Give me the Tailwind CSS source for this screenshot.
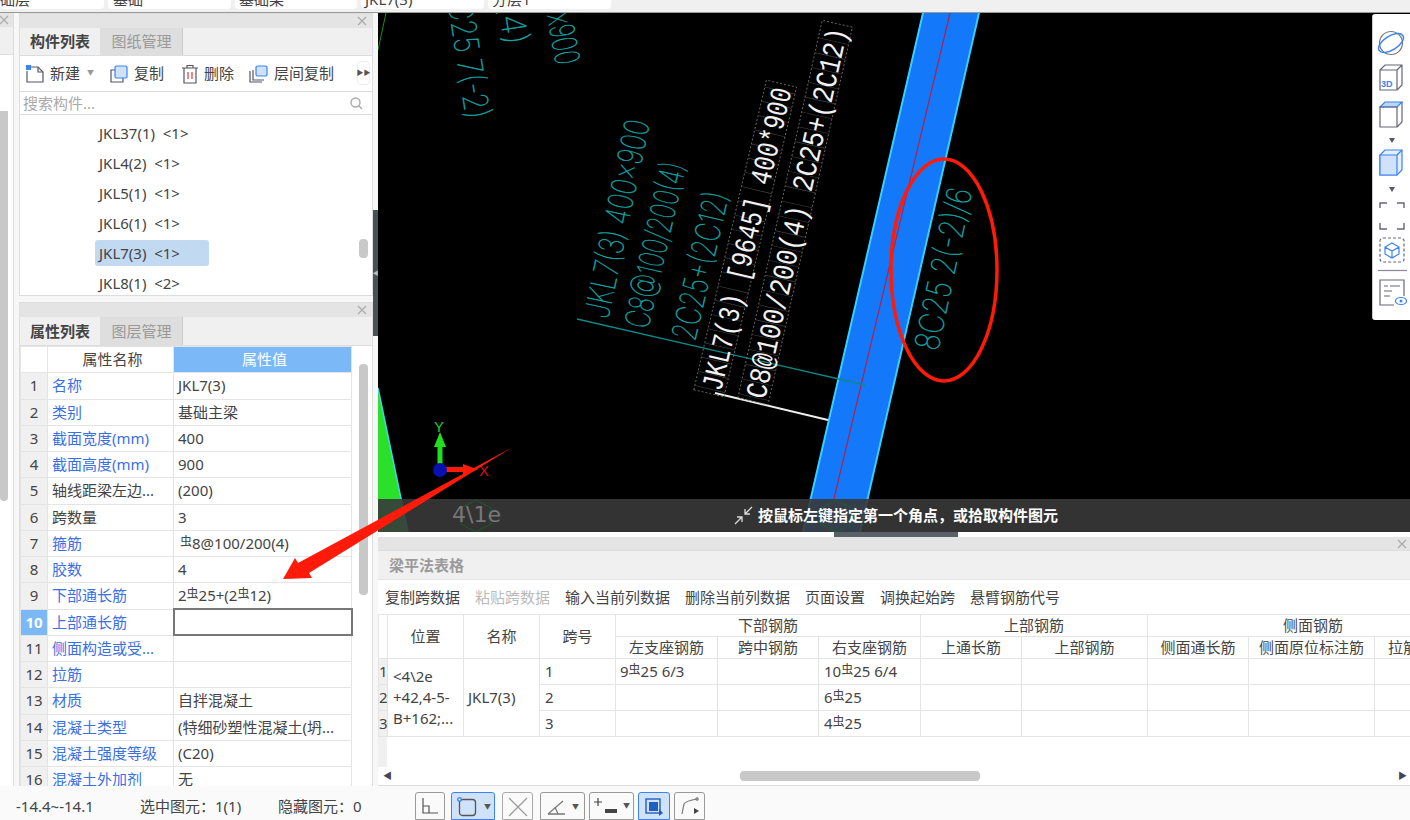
<!DOCTYPE html>
<html lang="zh-CN">
<head>
  <meta charset="UTF-8">
  <title>梁平法表格</title>
  <script src="https://cdn.jsdelivr.net/npm/@tailwindcss/browser@4"></script>
</head>
<body class="font-['Noto_Sans','Noto_Sans_CJK_SC',sans-serif] text-[15px] text-[#444]">
<div class="relative w-[1410px] h-[820px] overflow-hidden flex flex-col bg-white">

  <!-- top selector strip, only the bottom of it is visible -->
  <div class="h-[13px] shrink-0 bg-[#f0f0f0] flex gap-[4px] overflow-hidden border-b border-[#999]">
    <div class="w-[104px] h-[9px] bg-white rounded-b overflow-hidden"><div class="-mt-[11px] ml-[-15px] leading-[20px]">基础层</div></div>
    <div class="w-[123px] h-[9px] bg-white rounded-b overflow-hidden"><div class="-mt-[11px] ml-[5px] leading-[20px]">基础</div></div>
    <div class="w-[122px] h-[9px] bg-white rounded-b overflow-hidden"><div class="-mt-[11px] ml-[4px] leading-[20px]">基础梁</div></div>
    <div class="w-[123px] h-[9px] bg-white rounded-b overflow-hidden"><div class="-mt-[11px] ml-[4px] leading-[20px]">JKL7(3)</div></div>
    <div class="w-[123px] h-[9px] bg-white rounded-b overflow-hidden"><div class="-mt-[11px] ml-[4px] leading-[20px]">分层1</div></div>
  </div>

  <div class="flex h-[773px] shrink-0">
    <!-- left dock -->
    <div class="relative w-[378px] shrink-0 flex bg-[#f7f7f7]">
      <!-- clipped neighbour panel -->
      <div class="w-[14px] shrink-0 flex flex-col border-r border-[#ddd] bg-white">
        <div class="h-[14px] bg-[#e4e4e4] overflow-hidden"><svg class="w-[14px] h-[14px] -ml-[3px]" viewBox="0 0 14 14" fill="none" stroke="#aaa" stroke-width="1.200"><path d="M3 3l8 8M11 3l-8 8"/></svg></div>
        <div class="h-[28px] bg-[#f0f0f0] border-b border-[#ddd]"></div>
        <div class="flex-1 relative">
          <div class="absolute left-0 top-[56px] w-[8px] h-[390px] bg-[#c8c8c8] rounded-b"></div>
        </div>
      </div>

      <div class="ml-[5px] w-[354px] flex flex-col">
        <!-- component list panel -->
        <div class="h-[283px] flex flex-col border border-[#ddd] bg-white">
          <div class="h-[14px] bg-[#e4e4e4] flex justify-end pr-[3px]"><svg class="w-[14px] h-[14px]" viewBox="0 0 14 14" fill="none" stroke="#aaa" stroke-width="1.200"><path d="M3 3l8 8M11 3l-8 8"/></svg></div>
          <div class="h-[28px] bg-[#f0f0f0] flex border-b border-[#ddd]">
            <div class="w-[81px] font-bold text-[#444] flex items-center justify-center border-r border-[#ddd]">构件列表</div>
            <div class="w-[82px] bg-[#dedede] text-[#999] flex items-center justify-center border-r border-[#ccc]">图纸管理</div>
          </div>
          <div class="h-[35px] flex items-center relative text-[#444]">
            <svg class="ml-[5px] w-[20px] h-[20px] shrink-0" viewBox="0 0 20 20" fill="none" stroke="#556" stroke-width="1.200"><path d="M4 3h9l5 5v10H2V7"/><path d="M13 3v5h5"/><rect x="1" y="1" width="5" height="5" fill="#3b82f6" stroke="none"/></svg>
            <span class="ml-[5px]">新建</span>
            <span class="ml-[7px] w-[7px] text-[#999] text-[7px]">▼</span>
            <svg class="ml-[15px] w-[20px] h-[20px] shrink-0" viewBox="0 0 20 20" fill="none" stroke-width="1.200"><path d="M6 6H2v12h12v-4" stroke="#556"/><rect x="6" y="2" width="12" height="12" rx="1.500" fill="#cfe2fa" stroke="#3b82f6"/></svg>
            <span class="ml-[5px]">复制</span>
            <svg class="ml-[17px] w-[18px] h-[20px] shrink-0" viewBox="0 0 18 20" fill="none" stroke="#556" stroke-width="1.200"><path d="M1 4h16M6 4V1.500h6V4M3 4v15h12V4"/><path d="M7 8v7M11 8v7" stroke="#e33"/></svg>
            <span class="ml-[5px]">删除</span>
            <svg class="ml-[14px] w-[21px] h-[20px] shrink-0" viewBox="0 0 21 20" fill="none" stroke-width="1.200"><path d="M2 7v11h12M5 6v10h11" stroke="#556"/><rect x="8" y="2" width="11" height="10" rx="1.500" fill="#cfe2fa" stroke="#3b82f6"/></svg>
            <span class="ml-[5px]">层间复制</span>
            <div class="absolute right-[2px] top-[5px] w-[13px] h-[24px] border border-[#eee] rounded flex items-center justify-center text-[7px] text-[#555]">▶▶</div>
          </div>
          <div class="h-[24px] flex items-center justify-between border-y border-[#ddd] pl-[3px] pr-[9px] text-[#aaa]">
            <span>搜索构件...</span>
            <svg class="w-[14px] h-[14px]" viewBox="0 0 14 14" fill="none" stroke="#aaa" stroke-width="1.400"><circle cx="6.500" cy="6.500" r="4.500"/><path d="M10 10l3 3"/></svg>
          </div>
          <div class="relative flex-1 flex flex-col pt-[3px] pl-[75px] overflow-hidden">
            <div class="h-[30px] shrink-0 flex items-center pl-[4px]">JKL37(1)&nbsp; &lt;1&gt;</div>
            <div class="h-[30px] shrink-0 flex items-center pl-[4px]">JKL4(2)&nbsp; &lt;1&gt;</div>
            <div class="h-[30px] shrink-0 flex items-center pl-[4px]">JKL5(1)&nbsp; &lt;1&gt;</div>
            <div class="h-[30px] shrink-0 flex items-center pl-[4px]">JKL6(1)&nbsp; &lt;1&gt;</div>
            <div class="h-[30px] shrink-0 flex items-center"><div class="w-[114px] h-[26px] flex items-center pl-[4px] bg-[#c2d9f2] rounded-[3px]">JKL7(3)&nbsp; &lt;1&gt;</div></div>
            <div class="h-[30px] shrink-0 flex items-center pl-[4px]">JKL8(1)&nbsp; &lt;2&gt;</div>
            <div class="absolute right-[4px] top-[124px] w-[9px] h-[19px] bg-[#c8c8c8] rounded"></div>
          </div>
        </div>

        <!-- property list panel -->
        <div class="mt-[6px] flex-1 min-h-0 flex flex-col border border-[#ddd] border-b-0 bg-white overflow-hidden">
          <div class="h-[14px] shrink-0 bg-[#e4e4e4] flex justify-end pr-[3px]"><svg class="w-[14px] h-[14px]" viewBox="0 0 14 14" fill="none" stroke="#aaa" stroke-width="1.200"><path d="M3 3l8 8M11 3l-8 8"/></svg></div>
          <div class="h-[29px] shrink-0 bg-[#f0f0f0] flex border-b border-[#ddd]">
            <div class="w-[81px] font-bold flex items-center justify-center border-r border-[#ddd]">属性列表</div>
            <div class="w-[82px] bg-[#dedede] text-[#999] flex items-center justify-center border-r border-[#ccc]">图层管理</div>
          </div>
          <div class="relative flex-1">
            <table class="table-fixed border-collapse w-[331px] [&_td]:h-[26.250px] [&_td]:p-0 [&_td]:pl-[4px] [&_td]:border [&_td]:border-[#e4e4e4] [&_td]:leading-none [&_td]:whitespace-nowrap [&_td]:overflow-hidden">
              <colgroup><col class="w-[27px]"><col class="w-[126px]"><col class="w-[178px]"></colgroup>
              <tr><td class="border-t-0"></td><td class="text-center">属性名称</td><td class="text-center !bg-[#7ab8f7] text-white">属性值</td></tr>
              <tr><td class="!pl-0 text-center bg-[#f0f0f0]">1</td><td class="text-[#3b6fe6]">名称</td><td>JKL7(3)</td></tr>
              <tr><td class="!pl-0 text-center bg-[#f0f0f0]">2</td><td class="text-[#3b6fe6]">类别</td><td>基础主梁</td></tr>
              <tr><td class="!pl-0 text-center bg-[#f0f0f0]">3</td><td class="text-[#3b6fe6]">截面宽度(mm)</td><td>400</td></tr>
              <tr><td class="!pl-0 text-center bg-[#f0f0f0]">4</td><td class="text-[#3b6fe6]">截面高度(mm)</td><td>900</td></tr>
              <tr><td class="!pl-0 text-center bg-[#f0f0f0]">5</td><td>轴线距梁左边...</td><td>(200)</td></tr>
              <tr><td class="!pl-0 text-center bg-[#f0f0f0]">6</td><td>跨数量</td><td>3</td></tr>
              <tr><td class="!pl-0 text-center bg-[#f0f0f0]">7</td><td class="text-[#3b6fe6]">箍筋</td><td><span class="text-[12px] align-[3px] ml-[2px]">虫</span>8@100/200(4)</td></tr>
              <tr><td class="!pl-0 text-center bg-[#f0f0f0]">8</td><td class="text-[#3b6fe6]">胶数</td><td>4</td></tr>
              <tr><td class="!pl-0 text-center bg-[#f0f0f0]">9</td><td class="text-[#3b6fe6]">下部通长筋</td><td>2<span class="text-[12px] align-[3px]">虫</span>25+(2<span class="text-[12px] align-[3px]">虫</span>12)</td></tr>
              <tr><td class="!pl-0 text-center font-bold text-white bg-[#7ab8f7]">10</td><td class="text-[#3b6fe6]">上部通长筋</td><td class="!border-2 !border-[#777]"></td></tr>
              <tr><td class="!pl-0 text-center bg-[#f0f0f0]">11</td><td class="text-[#3b6fe6]">侧面构造或受...</td><td></td></tr>
              <tr><td class="!pl-0 text-center bg-[#f0f0f0]">12</td><td class="text-[#3b6fe6]">拉筋</td><td></td></tr>
              <tr><td class="!pl-0 text-center bg-[#f0f0f0]">13</td><td class="text-[#3b6fe6]">材质</td><td>自拌混凝土</td></tr>
              <tr><td class="!pl-0 text-center bg-[#f0f0f0]">14</td><td class="text-[#3b6fe6]">混凝土类型</td><td>(特细砂塑性混凝土(坍...</td></tr>
              <tr><td class="!pl-0 text-center bg-[#f0f0f0]">15</td><td class="text-[#3b6fe6]">混凝土强度等级</td><td>(C20)</td></tr>
              <tr><td class="!pl-0 text-center bg-[#f0f0f0]">16</td><td class="text-[#3b6fe6]">混凝土外加剂</td><td>无</td></tr>
            </table>
            <div class="absolute right-[4px] top-[18px] w-[9px] h-[231px] bg-[#c8c8c8] rounded"></div>
          </div>
        </div>
      </div>

      <!-- dock splitter -->
      <div class="absolute right-0 top-[197px] w-[5px] h-[126px] bg-[#4a5058] flex items-center justify-center text-[6px] text-[#bbb]">◀</div>
    </div>

    <!-- right side -->
    <div class="flex-1 min-w-0 flex flex-col">
      <!-- cad canvas -->
      <div class="relative h-[519px] shrink-0 bg-black overflow-hidden">
        <svg class="absolute inset-0 w-[1032px] h-[519px]" viewBox="378 13 1032 519" fill="none">
          <path d="M386 13L378 50" stroke="#1c8a1c"/>
          <polygon points="378,388 408,532 378,532" fill="#2be02b"/>
          <path d="M378 388L408 532" stroke="#33ddee" stroke-width="1.500"/>

          <polygon points="923,13 979,13 860,532 803,532" fill="#1478fa"/>
          <path d="M923 13L803 532M979 13L860 532" stroke="#35d0ff" stroke-width="2"/>
          <path d="M950 13L826 532" stroke="#b0204a" stroke-width="1.200"/>

          <path d="M577 319L865 385" stroke="#0a8a8a" stroke-width="1.300"/>
          <path d="M715 393L828 420" stroke="#eee" stroke-width="2"/>

          <!-- teal annotation text -->
          <g class="font-['Inter'] font-thin text-[34px]" fill="#12a5a5" stroke="#12a5a5" stroke-width=".5">
            <text transform="translate(608 320) rotate(-78)" textLength="202" lengthAdjust="spacingAndGlyphs">JKL7(3) 400x900</text>
            <text transform="translate(648 330) rotate(-77)" textLength="169" lengthAdjust="spacingAndGlyphs">C8@100/200(4)</text>
            <text transform="translate(695 342) rotate(-77)" textLength="151" lengthAdjust="spacingAndGlyphs">2C25+(2C12)</text>
            <text transform="translate(938 352) rotate(-78)" textLength="165" lengthAdjust="spacingAndGlyphs">8C25 2(-2)/6</text>
            <text transform="translate(445 -14) rotate(81)" textLength="136" lengthAdjust="spacingAndGlyphs">2C25 7(-2)</text>
            <text transform="translate(498 5) rotate(81)" textLength="42" lengthAdjust="spacingAndGlyphs">(4)</text>
            <text transform="translate(547 15) rotate(80)" textLength="52" lengthAdjust="spacingAndGlyphs">x900</text>
          </g>

          <!-- selected annotation with dashed glyph boxes -->
          <g transform="translate(721 392) rotate(-76.800)">
            <rect x="-4" y="-27" width="318" height="31" stroke="#777" stroke-dasharray="2 2" stroke-width=".8"/>
            <path d="M0 -11.500H310" stroke="#444" stroke-width="31" stroke-dasharray=".6 14"/>
            <text class="font-['Liberation_Mono'] text-[30px]" fill="#f2f2f2" textLength="310" lengthAdjust="spacingAndGlyphs">JKL7(3) [9645] 400*900</text>
          </g>
          <g transform="translate(765 400) rotate(-77.400)">
            <rect x="-4" y="-27" width="387" height="31" stroke="#777" stroke-dasharray="2 2" stroke-width=".8"/>
            <path d="M0 -11.500H379" stroke="#444" stroke-width="31" stroke-dasharray=".6 14.600"/>
            <text class="font-['Liberation_Mono'] text-[30px]" fill="#f2f2f2" textLength="379" lengthAdjust="spacingAndGlyphs">C8@100/200(4) 2C25+(2C12)</text>
          </g>

          <ellipse cx="944" cy="270" rx="53" ry="111" stroke="#ff1a0a" stroke-width="3.500"/>

          <!-- ucs -->
          <path d="M440 468V445" stroke="#1fe01f" stroke-width="5"/>
          <polygon points="440,432 446,447 434,447" fill="#1fe01f"/>
          <path d="M445 469.500H465" stroke="#ff1a0a" stroke-width="5"/>
          <polygon points="478,469.500 463,464 463,475" fill="#ff1a0a"/>
          <circle cx="440" cy="470" r="7" fill="#0a10b0"/>
          <text x="434" y="432" class="font-['Liberation_Sans'] text-[15px]" fill="#1fd01f">Y</text>
          <text x="479" y="476" class="font-['Liberation_Sans'] text-[15px]" fill="#d01010">X</text>
        </svg>

        <!-- view toolbar -->
        <div class="absolute right-0 top-[1px] w-[38px] h-[306px] bg-white rounded-l-[3px] border-l border-[#ccc]">
          <svg class="absolute left-0 top-0 w-[38px] h-[306px]" viewBox="0 0 38 306" fill="none" stroke-width="1.200">
            <!-- globe -->
            <circle cx="18" cy="29" r="11.500" stroke="#778"/>
            <ellipse cx="18" cy="29" rx="14" ry="7" transform="rotate(-32 18 29)" stroke="#3b82f6" stroke-width="1.500"/>
            <!-- 3d cube -->
            <path d="M7 56h17v20H7zM7 56l5-5h17v20l-5 5M24 56l5-5" stroke="#667"/>
            <text x="8" y="73" class="font-['Liberation_Sans'] font-bold text-[9px]" fill="#3b82f6">3D</text>
            <!-- cube with blue top -->
            <path d="M7 93l5-5h17l-5 5z" fill="#bcd6f8" stroke="#3b82f6"/>
            <path d="M7 93h17v20H7zM24 113l5-5V88" stroke="#667"/>
            <polygon points="16,124 22,124 19,129" fill="#556"/>
            <!-- blue cube -->
            <path d="M7 141l5-5h17v20l-5 5H7z" fill="#e4effc" stroke="#3b82f6"/>
            <path d="M7 141h17v20H7zM24 141l5-5" fill="#cfe2fa" stroke="#3b82f6"/>
            <polygon points="16,173 22,173 19,178" fill="#556"/>
            <!-- corners -->
            <path d="M7 194v-5h7M24 189h7v5M31 209v6h-7M14 215H7v-6" stroke="#667" stroke-width="1.400"/>
            <!-- dashed box with hexagon -->
            <rect x="7" y="224" width="24" height="24" rx="3" stroke="#667" stroke-dasharray="3 2"/>
            <path d="M19 229l7 4v7l-7 4-7-4v-7zM12 233l7 4 7-4M19 237v7" stroke="#3b82f6"/>
            <path d="M5 256.500H34" stroke="#889"/>
            <!-- list with eye -->
            <path d="M31 282v-16H7v25h14" stroke="#667"/>
            <path d="M11 272h4M17 272h10M11 277h8M11 282h6" stroke="#667"/>
            <ellipse cx="28" cy="287" rx="5.500" ry="3.500" stroke="#3b82f6"/><circle cx="28" cy="287" r="1.500" fill="#3b82f6"/>
          </svg>
        </div>

        <!-- hint bar -->
        <div class="absolute left-0 right-0 bottom-0 h-[33px] bg-[#383838]/90 flex items-center">
          <svg class="absolute left-[80px] top-[1px] w-[36px] h-[32px]" viewBox="0 0 36 32" fill="none" stroke="#1f5a2a"><path d="M18 0l15 8v16l-15 8-15-8V8z"/></svg>
          <svg class="absolute left-[440px] top-[1px] w-[36px] h-[32px]" viewBox="0 0 36 32" fill="none" stroke="#1f5a2a"><path d="M18 0l15 8v16l-15 8-15-8V8z"/></svg>
          <span class="absolute left-[74px] top-[1px] font-['DejaVu_Sans'] text-[22px] leading-[30px] text-[#777]">4\1e</span>
          <svg class="absolute left-[355px] top-[6px] w-[21px] h-[21px]" viewBox="0 0 21 21" fill="none" stroke="#ddd" stroke-width="1.300"><path d="M19 2l-7 7M12 4v5h5M2 19l7-7M4 12h5v5"/></svg>
          <span class="absolute left-[380px] text-white font-bold">按鼠标左键指定第一个角点，或拾取构件图元</span>
        </div>
      </div>

      <!-- splitter strip -->
      <div class="h-[5px] shrink-0 bg-white relative"><div class="absolute left-[456px] w-[124px] h-[5px] bg-[#5a6068]"></div></div>

      <!-- beam table panel -->
      <div class="flex-1 min-h-0 flex flex-col bg-white border-b border-[#ddd]">
        <div class="h-[14px] shrink-0 bg-[#e4e4e4] flex justify-end pr-[1px] border-b border-[#ddd]"><svg class="w-[14px] h-[14px]" viewBox="0 0 14 14" fill="none" stroke="#aaa" stroke-width="1.200"><path d="M3 3l8 8M11 3l-8 8"/></svg></div>
        <div class="h-[28px] shrink-0 bg-[#f0f0f0] flex items-center pl-[11px] font-bold text-[#999]">梁平法表格</div>
        <div class="h-[35px] shrink-0 flex items-center pl-[7px] gap-[15px] border-t border-[#e4e4e4]">
          <span>复制跨数据</span>
          <span class="text-[#bbb]">粘贴跨数据</span>
          <span>输入当前列数据</span>
          <span>删除当前列数据</span>
          <span>页面设置</span>
          <span>调换起始跨</span>
          <span>悬臂钢筋代号</span>
        </div>
        <div class="relative flex-1 min-h-0 overflow-hidden">
          <table class="table-fixed border-collapse w-[1100px] border-t border-[#e4e4e4] [&_td]:p-0 [&_td]:border [&_td]:border-[#e4e4e4] [&_td]:leading-none [&_td]:whitespace-nowrap">
            <colgroup>
              <col class="w-[9px]"><col class="w-[76px]"><col class="w-[76px]"><col class="w-[76px]"><col class="w-[102px]"><col class="w-[101px]"><col class="w-[102px]"><col class="w-[101px]"><col class="w-[126px]"><col class="w-[101px]"><col class="w-[126px]"><col class="w-[104px]">
            </colgroup>
            <tr class="h-[22px]">
              <td rowspan="2"></td><td rowspan="2" class="text-center">位置</td><td rowspan="2" class="text-center">名称</td><td rowspan="2" class="text-center">跨号</td>
              <td colspan="3" class="text-center">下部钢筋</td><td colspan="2" class="text-center">上部钢筋</td><td colspan="3" class="text-center">侧面钢筋</td>
            </tr>
            <tr class="h-[22px]">
              <td class="text-center">左支座钢筋</td><td class="text-center">跨中钢筋</td><td class="text-center">右支座钢筋</td><td class="text-center">上通长筋</td><td class="text-center">上部钢筋</td><td class="text-center">侧面通长筋</td><td class="text-center">侧面原位标注筋</td><td class="!pl-[13px]">拉筋</td>
            </tr>
            <tr class="h-[26px]">
              <td class="bg-[#f0f0f0] text-center">1</td>
              <td rowspan="3" class="!whitespace-normal !leading-[21px] !pl-[5px] break-all">&lt;4\2e<br>+42,4-5-<br>B+162;...</td>
              <td rowspan="3" class="!pl-[4px]">JKL7(3)</td>
              <td class="!pl-[5px]">1</td>
              <td class="!pl-[4px]">9<span class="text-[12px] align-[3px]">虫</span>25 6/3</td><td></td>
              <td class="!pl-[5px]">10<span class="text-[12px] align-[3px]">虫</span>25 6/4</td><td></td><td></td><td></td><td></td><td></td>
            </tr>
            <tr class="h-[26px]">
              <td class="bg-[#f0f0f0] text-center">2</td>
              <td class="!pl-[5px]">2</td><td></td><td></td>
              <td class="!pl-[5px]">6<span class="text-[12px] align-[3px]">虫</span>25</td><td></td><td></td><td></td><td></td><td></td>
            </tr>
            <tr class="h-[26px]">
              <td class="bg-[#f0f0f0] text-center">3</td>
              <td class="!pl-[5px]">3</td><td></td><td></td>
              <td class="!pl-[5px]">4<span class="text-[12px] align-[3px]">虫</span>25</td><td></td><td></td><td></td><td></td><td></td>
            </tr>
          </table>
          <div class="w-[9px] h-[32px] bg-[#f0f0f0]"></div>
          <div class="absolute left-0 right-0 bottom-0 h-[18px] bg-white flex items-center text-[9px] text-[#445]">
            <span class="ml-[5px]">◀</span>
            <div class="absolute left-[362px] w-[240px] h-[10px] bg-[#c8c8c8] rounded"></div>
            <span class="absolute right-[3px]">▶</span>
          </div>
        </div>
      </div>
    </div>
  </div>

  <!-- status bar -->
  <div class="relative flex-1 bg-[#fafafa] flex items-center">
    <span class="absolute left-[16px] top-[11px] leading-[18px]">-14.4~-14.1</span>
    <span class="absolute left-[140px] top-[11px] leading-[18px]">选中图元：1(1)</span>
    <span class="absolute left-[278px] top-[11px] leading-[18px]">隐藏图元：0</span>
    <div class="absolute left-[415px] top-[6px] flex">
      <div class="w-[30px] h-[28px] border border-[#999] rounded-t-[3px] flex justify-center pt-[4px]">
        <svg class="w-[18px] h-[18px]" viewBox="0 0 18 18" fill="none" stroke="#555" stroke-width="1.200"><path d="M2 1v15h15M2 9h6v7"/></svg>
      </div>
      <div class="ml-[6px] w-[44px] h-[28px] bg-[#cfe2fa] border border-[#3b82f6] rounded-t-[3px] flex items-start pt-[4px] pl-[5px] gap-[7px]">
        <svg class="w-[20px] h-[20px]" viewBox="0 0 20 20" fill="none" stroke="#555" stroke-width="1.300"><rect x="2.500" y="2.500" width="16" height="16" rx="3"/><circle cx="2.500" cy="2.500" r="1.800" fill="#cfe2fa" stroke="#3b82f6"/></svg>
        <span class="text-[7px] text-[#555] leading-[20px]">▼</span>
      </div>
      <div class="ml-[7px] w-[31px] h-[28px] border border-[#aaa] rounded-t-[3px] flex justify-center pt-[3px]">
        <svg class="w-[22px] h-[22px]" viewBox="0 0 22 22" fill="none" stroke="#999" stroke-width="1.200"><path d="M2 2l18 18M20 2L2 20"/></svg>
      </div>
      <div class="ml-[7px] w-[45px] h-[28px] border border-[#999] rounded-t-[3px] flex items-start pt-[5px] pl-[5px] gap-[6px]">
        <svg class="w-[20px] h-[18px]" viewBox="0 0 20 18" fill="none" stroke-width="1.200"><path d="M2 16h17" stroke="#555"/><path d="M2 16L17 3" stroke="#777"/><path d="M9 9l3 7" stroke="#777"/></svg>
        <span class="text-[7px] text-[#555] leading-[18px]">▼</span>
      </div>
      <div class="ml-[4px] w-[45px] h-[28px] border border-[#999] rounded-t-[3px] flex items-start pt-[3px] pl-[4px] gap-[5px]">
        <svg class="w-[24px] h-[20px]" viewBox="0 0 24 20" fill="none" stroke="#444"><path d="M4 2v8M0 6h8" stroke-width="1.200"/><rect x="11" y="13" width="12" height="4" fill="#444" stroke="none"/></svg>
        <span class="text-[7px] text-[#555] leading-[20px]">▼</span>
      </div>
      <div class="ml-[4px] w-[32px] h-[28px] bg-[#cfe2fa] border border-[#3b82f6] rounded-t-[3px] flex justify-center pt-[4px]">
        <svg class="w-[20px] h-[20px]" viewBox="0 0 20 20" fill="none" stroke-width="1.400"><rect x="2" y="2" width="14" height="14" stroke="#1e5fc0"/><rect x="5" y="5" width="9" height="9" fill="#1e5fc0"/><path d="M15 12l4 4-4 3z" fill="#1e5fc0" stroke="none"/></svg>
      </div>
      <div class="ml-[4px] w-[31px] h-[28px] border border-[#999] rounded-t-[3px] flex justify-center pt-[3px]">
        <svg class="w-[22px] h-[22px]" viewBox="0 0 22 22" fill="none" stroke="#777" stroke-width="1.200"><path d="M3 18l2-10 C7 5 12 4 18 3"/><circle cx="18" cy="3" r="1.200"/><path d="M15 12l5 3-5 3z" fill="#444" stroke="none"/></svg>
      </div>
    </div>
  </div>

  <!-- red annotation arrow over everything -->
  <svg class="absolute inset-0 w-[1410px] h-[820px] pointer-events-none" viewBox="0 0 1410 820">
    <polygon points="513,447 309,573 312,578 283,579 295,558 298,563" fill="#ff1a0a"/>
  </svg>
</div>
</body>
</html>
